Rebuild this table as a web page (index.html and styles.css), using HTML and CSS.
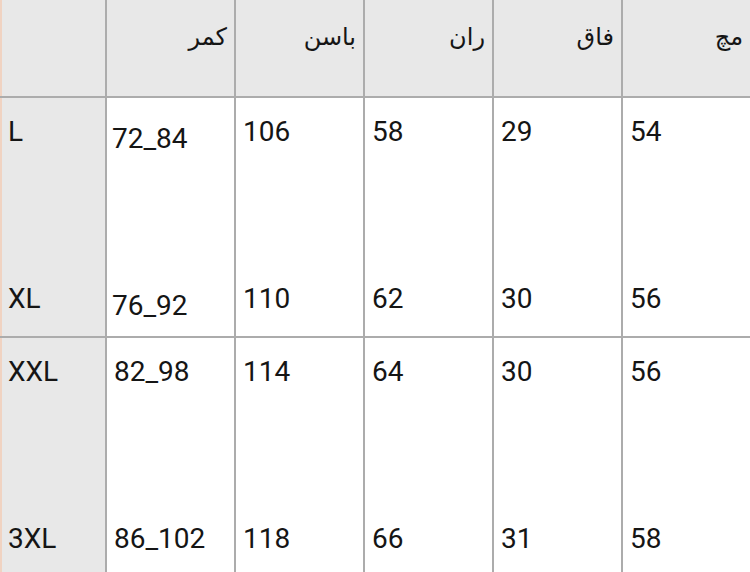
FILE: index.html
```html
<!DOCTYPE html>
<html lang="fa">
<head>
<meta charset="utf-8">
<link rel="stylesheet" href="styles.css">
</head>
<body>
<div class="table">
  <div class="cell head size"></div>
  <div class="cell head"><span dir="rtl">کمر</span></div>
  <div class="cell head"><span dir="rtl">باسن</span></div>
  <div class="cell head"><span dir="rtl">ران</span></div>
  <div class="cell head"><span dir="rtl">فاق</span></div>
  <div class="cell head"><span dir="rtl">مچ</span></div>

  <div class="cell body size"><span>L</span><span>XL</span></div>
  <div class="cell body shifted"><span>72_84</span><span>76_92</span></div>
  <div class="cell body"><span>106</span><span>110</span></div>
  <div class="cell body"><span>58</span><span>62</span></div>
  <div class="cell body"><span>29</span><span>30</span></div>
  <div class="cell body"><span>54</span><span>56</span></div>

  <div class="cell body size"><span>XXL</span><span>3XL</span></div>
  <div class="cell body"><span>82_98</span><span>86_102</span></div>
  <div class="cell body"><span>114</span><span>118</span></div>
  <div class="cell body"><span>64</span><span>66</span></div>
  <div class="cell body"><span>30</span><span>31</span></div>
  <div class="cell body"><span>56</span><span>58</span></div>
</div>
</body>
</html>
```

FILE: styles.css
```css
html, body {
  margin: 0;
  padding: 0;
  background: #ffffff;
  overflow: hidden;
}

.table {
  display: grid;
  grid-template-columns: 105px repeat(5, 127px);
  grid-template-rows: 96px 238px 240px;
  gap: 2px;
  background: #acacac;
  width: 750px;
  height: 578px;
  font-family: Roboto, "Liberation Sans", sans-serif;
  color: #151515;
}

.cell {
  box-sizing: border-box;
  background: #ffffff;
}

.head {
  background: #e8e8e8;
  text-align: right;
  padding: 22px 7px 0 0;
  font-family: "DejaVu Sans", sans-serif;
  font-size: 24px;
  line-height: 30px;
}

.size {
  background: #e8e8e8;
  border-left: 2px solid #f0d3c2;
}

.body {
  display: flex;
  flex-direction: column;
  gap: 133px;
  padding: 17px 0 0 7px;
  font-size: 28px;
  line-height: 34px;
}

.body.size {
  padding-left: 6px;
}

.shifted {
  padding-top: 24px;
  padding-left: 5px;
}
```
